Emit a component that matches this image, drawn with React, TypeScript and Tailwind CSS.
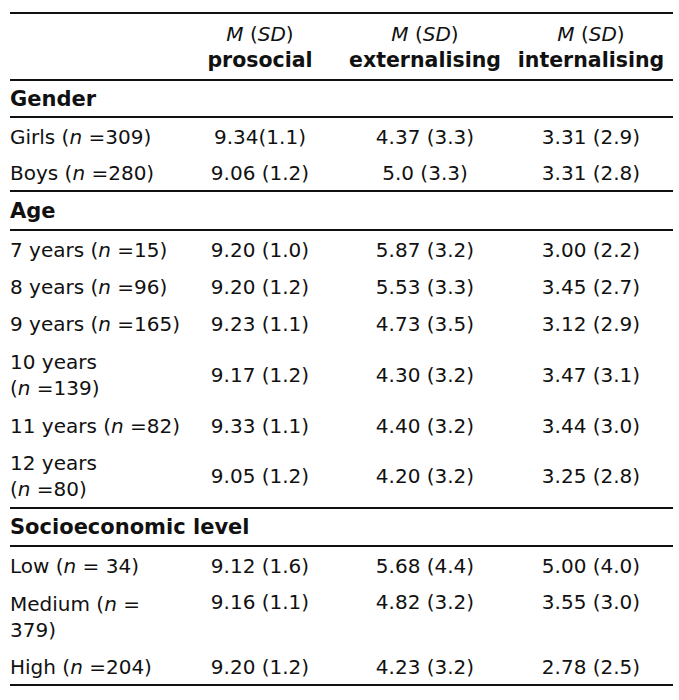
import type { ReactNode } from "react";

type Row = {
  label: ReactNode;
  values: string[];
  tall?: boolean;
  alignTop?: boolean;
};

type Section = {
  title: string;
  titleHeight: string;
  rows: Row[];
};

const N = () => <i>n</i>;

const sections: Section[] = [
  {
    title: "Gender",
    titleHeight: "h-[37px]",
    rows: [
      { label: <>Girls (<N /> =309)</>, values: ["9.34(1.1)", "4.37 (3.3)", "3.31 (2.9)"] },
      { label: <>Boys (<N /> =280)</>, values: ["9.06 (1.2)", "5.0 (3.3)", "3.31 (2.8)"] },
    ],
  },
  {
    title: "Age",
    titleHeight: "h-[39px]",
    rows: [
      { label: <>7 years (<N /> =15)</>, values: ["9.20 (1.0)", "5.87 (3.2)", "3.00 (2.2)"] },
      { label: <>8 years (<N /> =96)</>, values: ["9.20 (1.2)", "5.53 (3.3)", "3.45 (2.7)"] },
      { label: <>9 years (<N /> =165)</>, values: ["9.23 (1.1)", "4.73 (3.5)", "3.12 (2.9)"] },
      {
        label: <>10 years<br />(<N /> =139)</>,
        values: ["9.17 (1.2)", "4.30 (3.2)", "3.47 (3.1)"],
        tall: true,
      },
      { label: <>11 years (<N /> =82)</>, values: ["9.33 (1.1)", "4.40 (3.2)", "3.44 (3.0)"] },
      {
        label: <>12 years<br />(<N /> =80)</>,
        values: ["9.05 (1.2)", "4.20 (3.2)", "3.25 (2.8)"],
        tall: true,
      },
    ],
  },
  {
    title: "Socioeconomic level",
    titleHeight: "h-[38px]",
    rows: [
      { label: <>Low (<N /> = 34)</>, values: ["9.12 (1.6)", "5.68 (4.4)", "5.00 (4.0)"] },
      {
        label: <>Medium (<N /> =<br />379)</>,
        values: ["9.16 (1.1)", "4.82 (3.2)", "3.55 (3.0)"],
        tall: true,
        alignTop: true,
      },
      { label: <>High (<N /> =204)</>, values: ["9.20 (1.2)", "4.23 (3.2)", "2.78 (2.5)"] },
    ],
  },
];

const grid = "grid grid-cols-[180px_145px_180px_158px]";
const valueCell = ["pr-[5px] text-center", "text-center", "pr-[6px] text-center"];

function HeaderCell({ label, className }: { label: string; className: string }) {
  return (
    <div className={`flex flex-col items-center ${className}`}>
      <span>
        <i>M</i> (<i>SD</i>)
      </span>
      <span className="text-[20.5px] font-bold">{label}</span>
    </div>
  );
}

function DataRow({ row, last }: { row: Row; last: boolean }) {
  const height = row.tall ? "h-[65px]" : "h-[37px]";
  const border = last ? "border-b-2 border-[#111]" : "";
  return (
    <div className={`${grid} ${height} ${border} box-border`}>
      <div className="flex items-center">
        <span>{row.label}</span>
      </div>
      {row.values.map((v, i) => (
        <div
          key={i}
          className={`flex justify-center ${row.alignTop ? "items-start pt-[5px]" : "items-center"} ${valueCell[i]}`}
        >
          {v}
        </div>
      ))}
    </div>
  );
}

export default function App() {
  return (
    <div
      className="min-h-[700px] w-[679px] bg-white pl-[10px] pt-[12px] text-[20px] leading-[26px] text-[#111]"
      style={{ fontFamily: '"DejaVu Sans", Verdana, sans-serif' }}
    >
      <div className="w-[663px] border-t-2 border-[#111]">
        <div className={`${grid} box-border h-[67px] content-center border-b-2 border-[#111]`}>
          <div />
          <HeaderCell label="prosocial" className="pr-[5px]" />
          <HeaderCell label="externalising" className="" />
          <HeaderCell label="internalising" className="pr-[6px]" />
        </div>

        {sections.map((section) => (
          <div key={section.title}>
            <div className={`box-border flex items-center border-b-2 border-[#111] ${section.titleHeight}`}>
              <span className="text-[21px] font-bold">{section.title}</span>
            </div>
            {section.rows.map((row, i) => (
              <DataRow key={i} row={row} last={i === section.rows.length - 1} />
            ))}
          </div>
        ))}
      </div>
    </div>
  );
}
